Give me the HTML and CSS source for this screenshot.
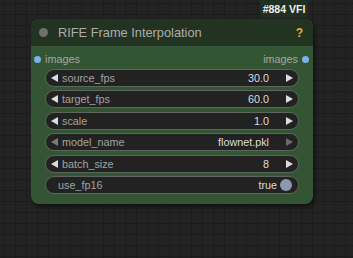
FILE: index.html
```html
<!DOCTYPE html>
<html lang="en">
<head>
    <meta charset="UTF-8">
    <meta name="viewport" content="width=device-width, initial-scale=1.0">
    <title>RIFE Frame Interpolation</title>
    <link rel="stylesheet" href="styles.css">
</head>
<body>
    <div class="canvas">
        <div class="badge">#884 VFI</div>
        <div class="node">
            <div class="node-title">
                <span class="title-dot"></span>
                <span class="title-text">RIFE Frame Interpolation</span>
                <span class="help">?</span>
            </div>
            <div class="node-body">
                <div class="slots">
                    <div class="slot">
                        <span class="slot-dot"></span>
                        <span>images</span>
                    </div>
                    <div class="slot">
                        <span>images</span>
                        <span class="slot-dot"></span>
                    </div>
                </div>
                <div class="widget">
                    <span class="arrow left"></span>
                    <span class="label">source_fps</span>
                    <span class="value">30.0</span>
                    <span class="arrow right"></span>
                </div>
                <div class="widget">
                    <span class="arrow left"></span>
                    <span class="label">target_fps</span>
                    <span class="value">60.0</span>
                    <span class="arrow right"></span>
                </div>
                <div class="widget">
                    <span class="arrow left"></span>
                    <span class="label">scale</span>
                    <span class="value">1.0</span>
                    <span class="arrow right"></span>
                </div>
                <div class="widget combo">
                    <span class="arrow left"></span>
                    <span class="label">model_name</span>
                    <span class="value">flownet.pkl</span>
                    <span class="arrow right"></span>
                </div>
                <div class="widget">
                    <span class="arrow left"></span>
                    <span class="label">batch_size</span>
                    <span class="value">8</span>
                    <span class="arrow right"></span>
                </div>
                <div class="widget toggle">
                    <span class="label">use_fp16</span>
                    <span class="value">true</span>
                    <span class="knob"></span>
                </div>
            </div>
        </div>
    </div>
</body>
</html>
```

FILE: styles.css
```css
body {
    margin: 0;
    padding: 0;
    font-family: "Liberation Sans", Arial, sans-serif;
    background-color: #222;
}
.canvas {
    position: relative;
    width: 353px;
    height: 258px;
    overflow: hidden;
    background-color: #232323;
    background-image:
        linear-gradient(to right, rgba(0, 0, 0, 0.2) 1px, transparent 1px),
        linear-gradient(to bottom, rgba(0, 0, 0, 0.2) 1px, transparent 1px);
    background-size: 11px 11px;
    background-position: 4px 3px;
}
.badge {
    position: absolute;
    left: 260px;
    top: 0;
    width: 48px;
    height: 18px;
    background-color: #1f3023;
    border-radius: 0 0 5px 5px;
    color: #eee;
    font-size: 10.5px;
    font-weight: bold;
    display: flex;
    align-items: center;
    justify-content: center;
}
.node {
    position: absolute;
    left: 31px;
    top: 19px;
    width: 282px;
    height: 185px;
    background-color: #335533;
    border-radius: 8px;
    box-shadow: 2px 3px 4px rgba(0, 0, 0, 0.5);
    display: flex;
    flex-direction: column;
}
.node-title {
    height: 27px;
    background-color: #223322;
    border-radius: 8px 8px 0 0;
    display: flex;
    align-items: center;
    padding: 0 10px 0 8px;
}
.title-dot {
    width: 9px;
    height: 9px;
    border-radius: 50%;
    background-color: #707070;
    margin-right: 10px;
}
.title-text {
    flex: 1;
    color: #adadad;
    font-size: 12.8px;
}
.help {
    color: #e0b027;
    font-size: 12px;
    font-weight: bold;
}
.node-body {
    display: flex;
    flex-direction: column;
    gap: 3.4px;
    padding: 4px 14px 0;
}
.slots {
    height: 18px;
    margin: 0 -10px -2.4px -11px;
    display: flex;
    justify-content: space-between;
    align-items: center;
    color: #a6a6a6;
    font-size: 10.8px;
}
.slot {
    display: flex;
    align-items: center;
    gap: 4px;
}
.slot-dot {
    width: 7px;
    height: 7px;
    border-radius: 50%;
    background-color: #7ab3e6;
}
.widget {
    height: 18px;
    box-sizing: border-box;
    border: 1px solid #5c665c;
    border-radius: 9px;
    background-color: #222;
    display: flex;
    align-items: center;
    padding: 0 5px;
    font-size: 10.8px;
}
.label {
    flex: 1;
    color: #a3a3a3;
}
.value {
    color: #dcdcdc;
}
.arrow {
    width: 0;
    height: 0;
    border-top: 4px solid transparent;
    border-bottom: 4px solid transparent;
}
.arrow.left {
    border-right: 7.5px solid #dcdcdc;
    margin-right: 4px;
}
.arrow.right {
    border-left: 7.5px solid #dcdcdc;
    margin-left: 17px;
}
.combo .arrow.left {
    border-right-color: #7a7a7a;
}
.combo .arrow.right {
    border-left-color: #6a6a6a;
}
.toggle {
    padding: 0 6px 0 12px;
}
.knob {
    width: 12px;
    height: 12px;
    border-radius: 50%;
    background-color: #8c97b0;
    margin-left: 3px;
}
```
